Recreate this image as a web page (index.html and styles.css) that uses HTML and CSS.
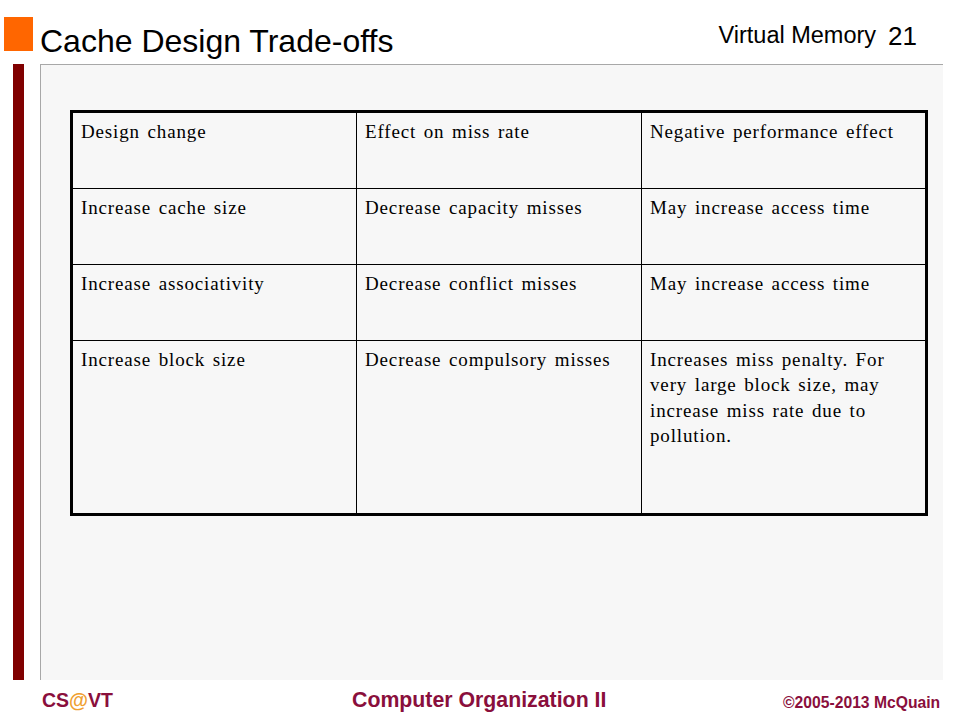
FILE: index.html
```html
<!DOCTYPE html>
<html>
<head>
<meta charset="utf-8">
<link rel="stylesheet" href="styles.css">
</head>
<body>
<div class="slide">
  <header class="header">
    <div class="bullet"></div>
    <h1 class="title">Cache Design Trade-offs</h1>
    <div class="topic">Virtual Memory</div>
    <div class="page">21</div>
  </header>
  <div class="main">
    <div class="bar"></div>
    <div class="panel">
      <div class="table">
        <div class="cell">Design change</div>
        <div class="cell">Effect on miss rate</div>
        <div class="cell">Negative performance effect</div>
        <div class="cell">Increase cache size</div>
        <div class="cell">Decrease capacity misses</div>
        <div class="cell">May increase access time</div>
        <div class="cell">Increase associativity</div>
        <div class="cell">Decrease conflict misses</div>
        <div class="cell">May increase access time</div>
        <div class="cell">Increase block size</div>
        <div class="cell">Decrease compulsory misses</div>
        <div class="cell">Increases miss penalty. For very large block size, may increase miss rate due to pollution.</div>
      </div>
    </div>
  </div>
  <footer class="footer">
    <div class="brand">CS<span class="at">@</span>VT</div>
    <div class="course">Computer Organization II</div>
    <div class="copy">&copy;2005-2013 McQuain</div>
  </footer>
</div>
</body>
</html>
```
FILE: styles.css
```css
html, body {
  margin: 0;
  padding: 0;
  background: #ffffff;
}
.slide {
  width: 960px;
  height: 720px;
  overflow: hidden;
  font-family: "Liberation Sans", Arial, sans-serif;
  color: #000;
}
.header {
  height: 64px;
  display: flex;
  align-items: flex-start;
}
.bullet {
  width: 29px;
  height: 34px;
  margin: 17px 0 0 4px;
  background: #ff6600;
}
.title {
  margin: 23px 0 0 7px;
  font-size: 32px;
  line-height: 36px;
  font-weight: normal;
  flex: 1;
}
.topic {
  margin-top: 22px;
  font-size: 23.5px;
  line-height: 26px;
}
.page {
  margin: 21px 43px 0 12px;
  font-size: 26px;
  line-height: 30px;
}
.main {
  display: flex;
  height: 616px;
}
.bar {
  width: 11px;
  margin-left: 13px;
  background: #800000;
}
.panel {
  margin-left: 16px;
  width: 903px;
  background: #f7f7f7;
  border-left: 1px solid #a8a8a8;
  border-top: 1px solid #a8a8a8;
  padding: 45px 0 0 29px;
  box-sizing: border-box;
}
.table {
  width: 852px;
  display: grid;
  grid-template-columns: 283px 284px 283px;
  grid-template-rows: 75px 75px 75px 172px;
  gap: 1px;
  background: #000;
  border: 3px solid #000;
}
.cell {
  background: #f7f7f7;
  font-family: "Liberation Serif", "Times New Roman", serif;
  font-size: 19px;
  line-height: 25.3px;
  letter-spacing: 0.85px;
  word-spacing: 2px;
  padding: 6px 8px 0 8px;
}
.footer {
  display: flex;
  align-items: baseline;
  font-weight: bold;
  color: #8a0f3c;
  padding-top: 8px;
}
.brand {
  margin-left: 42px;
  font-size: 19.5px;
  width: 310px;
}
.at {
  color: #f0a030;
}
.course {
  font-size: 21.3px;
  width: 431px;
}
.copy {
  font-size: 15.7px;
  position: relative;
  top: 1px;
}
```
